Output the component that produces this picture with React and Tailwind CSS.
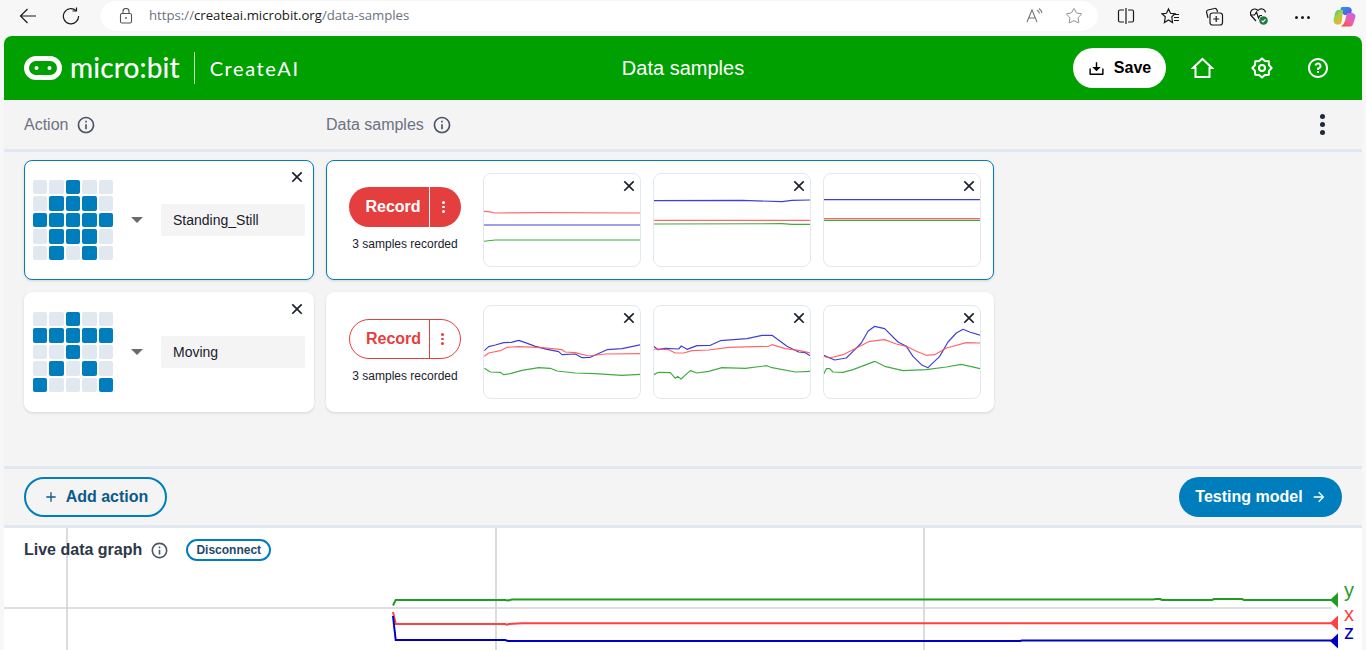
import React from "react";
import { RiInformationLine, RiCloseLine, RiDownload2Line, RiAddLine, RiArrowRightLine, RiQuestionLine } from "react-icons/ri";
import { Star } from "lucide-react";

const BLUE = "#0000c0";
const RED = "#ff4d4d";
const GREEN = "#1f9d1f";

const pts = (a) => a.map((p) => p.join(",")).join(" ");

const row1 = [
  {
    r: [[24, 139], [40, 140], [60, 144], [200, 143], [496, 144]],
    b: [[24, 180], [496, 180]],
    g: [[24, 229], [60, 225], [496, 225]],
  },
  {
    b: [[534, 107], [800, 106], [920, 110], [950, 106], [1006, 105]],
    r: [[534, 166], [1006, 166]],
    g: [[534, 177], [920, 176], [950, 178], [1006, 178]],
  },
  {
    b: [[1041, 104], [1512, 104]],
    r: [[1041, 161], [1512, 161]],
    g: [[1041, 166], [1512, 166]],
  },
];
const row2 = [
  {
    b: [[27, 158], [40, 146], [60, 141], [85, 134], [108, 133], [130, 127], [150, 134], [180, 145], [215, 154], [250, 161], [260, 170], [300, 168], [320, 179], [345, 178], [395, 155], [440, 152], [496, 140]],
    r: [[27, 175], [40, 165], [75, 158], [95, 148], [130, 146], [200, 149], [260, 155], [270, 162], [300, 164], [340, 174], [390, 168], [496, 167]],
    g: [[27, 211], [45, 222], [75, 223], [85, 230], [105, 227], [140, 217], [190, 209], [225, 211], [245, 219], [300, 225], [360, 227], [440, 232], [496, 229]],
  },
  {
    b: [[535, 145], [548, 155], [570, 151], [610, 153], [618, 144], [635, 154], [665, 143], [705, 142], [735, 128], [815, 122], [860, 112], [890, 112], [935, 145], [970, 162], [990, 164], [1006, 174]],
    r: [[535, 153], [580, 155], [600, 165], [625, 165], [650, 158], [700, 156], [760, 148], [880, 145], [890, 140], [930, 152], [970, 157], [1006, 165]],
    g: [[535, 230], [550, 223], [585, 224], [600, 241], [607, 235], [617, 243], [645, 218], [665, 225], [700, 220], [740, 209], [810, 211], [875, 203], [890, 209], [960, 222], [1006, 220]],
  },
  {
    b: [[1042, 172], [1075, 186], [1110, 180], [1130, 160], [1155, 135], [1175, 100], [1195, 85], [1225, 92], [1265, 132], [1290, 145], [1310, 175], [1335, 200], [1355, 209], [1390, 175], [1415, 132], [1440, 105], [1460, 94], [1480, 102], [1512, 112]],
    r: [[1042, 175], [1060, 180], [1100, 170], [1140, 150], [1180, 130], [1225, 125], [1260, 138], [1290, 145], [1320, 160], [1350, 172], [1375, 170], [1410, 150], [1470, 134], [1512, 135]],
    g: [[1042, 228], [1050, 212], [1060, 212], [1070, 222], [1100, 223], [1130, 215], [1195, 190], [1225, 205], [1280, 218], [1350, 215], [1410, 207], [1455, 199], [1512, 212]],
  },
];

function Sample({ data, x0, y0 }) {
  return (
    <div className="relative w-[158px] h-[94px] rounded-lg border border-[#e2e8f0] bg-white overflow-hidden">
      <svg className="block w-full h-full" viewBox={`${x0} ${y0} 468 276`} fill="none" strokeWidth="3.5" strokeLinejoin="round">
        <polyline points={pts(data.g)} stroke={GREEN} opacity="0.85" />
        <polyline points={pts(data.b)} stroke={BLUE} opacity="0.75" />
        <polyline points={pts(data.r)} stroke={RED} opacity="0.85" />
      </svg>
      <RiCloseLine className="absolute top-[2px] right-[1px] text-[#1a202c]" size={20} />
    </div>
  );
}

function Led({ on }) {
  const cells = [];
  for (let i = 0; i < 25; i++) {
    cells.push(
      <div key={i} className={on.includes(i) ? "rounded-[2px] bg-[#007dbc]" : "rounded-[2px] bg-[#e2e8f0]"} />
    );
  }
  return <div className="grid grid-cols-5 grid-rows-5 gap-[2px] w-[80px] h-[80px]">{cells}</div>;
}

function Row({ name, on, active, data, x0s, y0 }) {
  const ring = active ? "border border-[#007dbc]" : "border border-white";
  const dot = active ? "w-[3px] h-[2.5px] rounded-full bg-white" : "w-[3px] h-[2.5px] rounded-full bg-[#e53e3e]";
  return (
    <div className="flex gap-3">
      <div className={`relative w-[290px] h-[120px] rounded-lg bg-white shadow-sm ${ring} flex items-center pl-[8px]`}>
        <Led on={on} />
        <div className="ml-[18px] w-0 h-0 border-l-[6px] border-r-[6px] border-t-[6px] border-l-transparent border-r-transparent border-t-[#6b6b6b]" />
        <div className="ml-[18px] w-[144px] h-8 bg-[#f4f4f4] rounded-[2px] flex items-center pl-3 text-sm text-[#1a202c]">{name}</div>
        <RiCloseLine className="absolute top-[6px] right-[6px] text-[#1a202c]" size={20} />
      </div>
      <div className={`w-[668px] h-[120px] rounded-lg bg-white shadow-sm ${ring} flex items-center`}>
        <div className="w-[156px] flex flex-col items-center shrink-0">
          <div className={active
            ? "flex w-[112px] h-10 rounded-full bg-[#e53e3e] text-white overflow-hidden"
            : "flex w-[112px] h-10 rounded-full bg-white border border-[#e53e3e] text-[#e53e3e] overflow-hidden"}>
            <div className={active ? "w-[80px] flex items-center justify-center pl-[8px] text-base font-bold" : "w-[79px] flex items-center justify-center pl-[8px] text-base font-bold"}>Record</div>
            <div className={active ? "flex-1 flex items-center justify-center pr-[5px] border-l border-white" : "flex-1 flex items-center justify-center pr-[5px] border-l border-[#e53e3e]"}>
              <div className="flex flex-col gap-[2px]">
                <span className={dot} />
                <span className={dot} />
                <span className={dot} />
              </div>
            </div>
          </div>
          <div className="mt-[10px] mb-[1px] text-xs leading-[15px] text-[#1a202c]">3 samples recorded</div>
        </div>
        <div className="flex gap-3">
          {data.map((d, i) => <Sample key={i} data={d} x0={x0s[i]} y0={y0} />)}
        </div>
      </div>
    </div>
  );
}

function Chrome() {
  return (
    <div className="h-9 shrink-0 relative flex items-center font-['Open_Sans',sans-serif] text-[#1a1a1a]">
      <div className="w-[100px] flex items-center pl-[19px] gap-[25px] shrink-0 -mt-[4px]">
        <svg width="18" height="18" viewBox="0 0 18 18" fill="none" stroke="#1a1a1a" strokeWidth="1.2">
          <path d="M1.5 9 H17 M8.5 2 L1.5 9 L8.5 16" />
        </svg>
        <svg width="18" height="18" viewBox="0 0 18 18" fill="none" stroke="#1a1a1a" strokeWidth="1.2">
          <path d="M14 3.5 A7.6 7.6 0 1 0 16.6 9" />
          <path d="M10.5 4 H14.5 V0.5" />
        </svg>
      </div>
      <div className="w-[998px] h-[30px] -mt-[4px] bg-white rounded-full flex items-center shrink-0 shadow-[0_0_1px_rgba(0,0,0,0.08)]">
        <svg className="ml-[19px] shrink-0" width="14" height="16" viewBox="0 0 14 16" fill="none" stroke="#555" strokeWidth="1.1">
          <rect x="1.5" y="5.5" width="11" height="9.5" rx="1.5" />
          <path d="M4 5.5 V3.5 A3 3 0 0 1 10 3.5 V5.5" />
          <circle cx="7" cy="10" r="0.9" fill="#555" stroke="none" />
        </svg>
        <div className="ml-[16px] text-[13.2px] whitespace-nowrap text-[#6b7280]">
          https://<span className="text-[#1a1a1a]">createai.microbit.org</span>/data-samples
        </div>
        <div className="ml-auto flex items-center gap-[22px] pr-[15px] text-[#777]">
          <svg width="18" height="18" viewBox="0 0 18 18" fill="none" stroke="currentColor" strokeWidth="1.1">
            <path d="M2 15 L7 3 L12 15 M4 11 H10" />
            <path d="M12 3 Q14 4 14.5 6.5 M14 1.5 Q16.5 3 17 6" />
          </svg>
          <Star size={18} strokeWidth={1.1} />
        </div>
      </div>
      <svg className="absolute left-[1117px] top-[7px]" width="18" height="18" viewBox="0 0 18 18" fill="none" stroke="#1a1a1a" strokeWidth="1.2">
        <path d="M7 3 H3 a1.5 1.5 0 0 0 -1.5 1.5 V13.5 A1.5 1.5 0 0 0 3 15 H7 M11 3 H15 a1.5 1.5 0 0 1 1.5 1.5 V13.5 A1.5 1.5 0 0 1 15 15 H11 M9 1 V17" />
      </svg>
      <svg className="absolute left-[1161px] top-[7px]" width="19" height="18" viewBox="0 0 19 18" fill="none" stroke="#1a1a1a" strokeWidth="1.2">
        <path d="M7.5 2 L9.5 6.3 L14 6.8 L10.8 9.8 L11.5 15.5 L7.5 13 L3.4 15.5 L4.3 9.8 L1 6.8 L5.5 6.3 Z" />
        <path d="M13 7.5 H18 M13 10.5 H18 M13 13.5 H18" />
      </svg>
      <svg className="absolute left-[1205px] top-[7px]" width="19" height="19" viewBox="0 0 19 19" fill="none" stroke="#1a1a1a" strokeWidth="1.2">
        <path d="M3 11 L1.5 5 A2 2 0 0 1 3 3 L9.5 1.5 A2 2 0 0 1 12 3 L12.5 5" />
        <rect x="5" y="6" width="12.5" height="12" rx="2.5" />
        <path d="M11.2 9 V15 M8.2 12 H14.2" />
      </svg>
      <svg className="absolute left-[1249px] top-[6px]" width="21" height="20" viewBox="0 0 21 20" fill="none" stroke="#1a1a1a" strokeWidth="1.2">
        <path d="M7 15 L2.5 10 A4.2 4.2 0 0 1 9 4.5 A4.2 4.2 0 0 1 16.5 6.5" />
        <path d="M1 9 H5.5 L7.5 6 L9.5 12 L11 9.5 H13" />
        <circle cx="14.5" cy="14.5" r="4.3" fill="#1f7a3d" stroke="none" />
        <path d="M12.6 14.6 L14 16 L16.5 13.4" stroke="#fff" />
      </svg>
      <div className="absolute left-[1295px] top-[16px] flex gap-[3px]">
        <span className="w-[3px] h-[3px] rounded-full bg-[#1a1a1a]" />
        <span className="w-[3px] h-[3px] rounded-full bg-[#1a1a1a]" />
        <span className="w-[3px] h-[3px] rounded-full bg-[#1a1a1a]" />
      </div>
      <svg className="absolute left-[1333px] top-[6px]" width="23" height="22" viewBox="0 0 23 22">
        <defs>
          <linearGradient id="cpA" x1="0" y1="0" x2="1" y2="1">
            <stop offset="0" stopColor="#1f9fe8" />
            <stop offset="1" stopColor="#5f4ce8" />
          </linearGradient>
          <linearGradient id="cpB" x1="0" y1="0" x2="0.6" y2="1">
            <stop offset="0" stopColor="#35c0a0" />
            <stop offset="0.5" stopColor="#a8d040" />
            <stop offset="1" stopColor="#f5b030" />
          </linearGradient>
          <linearGradient id="cpC" x1="0.8" y1="0" x2="0.2" y2="1">
            <stop offset="0" stopColor="#c860e8" />
            <stop offset="0.6" stopColor="#f060a0" />
            <stop offset="1" stopColor="#f05030" />
          </linearGradient>
        </defs>
        <path d="M9 1 H15 Q18 1 18.8 4 L18 9 H11 L7.5 5 Q7.5 1 9 1 Z" fill="url(#cpA)" />
        <path d="M5.5 4 H10 L8.8 15 Q8.3 18.5 5.5 18.5 H3.5 Q0.5 17.5 0.5 14 L2 7.5 Q2.7 4 5.5 4 Z" fill="url(#cpB)" />
        <path d="M14 7 H19.5 Q22.8 8 22.4 11 L20.5 17 Q19.5 20.5 17 20.5 H8 Q11 19 12 15 Z" fill="url(#cpC)" />
      </svg>
    </div>
  );
}

function Gear() {
  const c = 11;
  const p = [];
  for (let i = 0; i < 16; i++) {
    const a = (i * Math.PI) / 8;
    const r = i % 2 === 0 ? 9.6 : 7.6;
    p.push(`${(c + r * Math.cos(a)).toFixed(2)},${(c + r * Math.sin(a)).toFixed(2)}`);
  }
  return (
    <svg className="ml-[37px]" width="22" height="22" viewBox="0 0 22 22" fill="none" stroke="#fff" strokeWidth="2" strokeLinejoin="round">
      <polygon points={p.join(" ")} />
      <circle cx="11" cy="11" r="3" />
    </svg>
  );
}

function Header() {
  return (
    <div className="relative h-16 shrink-0 bg-[#00a000] rounded-t-lg flex items-center px-5 text-white">
      <svg width="38" height="24" viewBox="0 0 38 24" fill="none" className="shrink-0">
        <rect x="2.5" y="2.5" width="33" height="19" rx="9.5" stroke="#fff" strokeWidth="5" />
        <circle cx="12.5" cy="12" r="2" fill="#fff" />
        <circle cx="25.5" cy="12" r="2" fill="#fff" />
      </svg>
      <div className="ml-[8px] text-[28px] leading-none font-['Lato',sans-serif] font-medium tracking-[0.1px] -mt-[3px]">micro:bit</div>
      <div className="ml-[14px] w-px h-8 bg-[#b5e5b5]" />
      <div className="ml-[15px] text-[20px] font-['Lato',sans-serif] font-normal tracking-[1.6px]">CreateAI</div>
      <div className="absolute left-0 right-0 text-center text-[20px] font-medium pointer-events-none">Data samples</div>
      <div className="ml-auto mr-[12px] flex items-center">
        <div className="w-[93px] h-10 rounded-full bg-white text-black flex items-center justify-center gap-[9px]">
          <RiDownload2Line size={17} />
          <span className="text-base font-bold">Save</span>
        </div>
        <svg className="ml-[25px]" width="23" height="22" viewBox="0 0 23 22" fill="none" stroke="#fff" strokeWidth="2" strokeLinejoin="miter">
          <path d="M11.5 2 L21 11 H18.5 V20 H4.5 V11 H2 Z" />
        </svg>
        <Gear />
        <RiQuestionLine className="ml-[33px]" size={24} />
      </div>
    </div>
  );
}

export default function App() {
  return (
    <div className="w-[1366px] h-[650px] overflow-hidden bg-[#f7f7f7] flex flex-col font-['Liberation_Sans',sans-serif]">
      <Chrome />
      <div className="mx-1 flex-1 min-h-0 flex flex-col">
        <Header />
        <div className="h-[52px] shrink-0 bg-[#f4f4f4] border-b-[3px] border-[#e2e8f0] flex items-center px-5 text-[#6b7280] relative">
          <div className="w-[302px] flex items-center gap-2 text-base">
            <span>Action</span>
            <RiInformationLine size={20} className="text-[#4a5568]" />
          </div>
          <div className="flex items-center gap-2 text-base">
            <span>Data samples</span>
            <RiInformationLine size={20} className="text-[#4a5568]" />
          </div>
          <div className="ml-auto mr-[17px] flex flex-col gap-[3px]">
            <span className="w-[5px] h-[5px] rounded-full bg-[#1f2937]" />
            <span className="w-[5px] h-[5px] rounded-full bg-[#1f2937]" />
            <span className="w-[5px] h-[5px] rounded-full bg-[#1f2937]" />
          </div>
        </div>
        <div className="h-[314px] shrink-0 bg-[#f4f4f4] px-5 pt-2 flex flex-col gap-3">
          <Row name="Standing_Still" active on={[2, 6, 7, 8, 10, 11, 12, 13, 14, 16, 17, 18, 21, 23]} data={row1} x0s={[26, 536, 1043]} y0={27} />
          <Row name="Moving" on={[2, 5, 6, 7, 8, 9, 12, 16, 18, 20, 24]} data={row2} x0s={[26, 536, 1043]} y0={24} />
        </div>
        <div className="h-[59px] shrink-0 bg-[#f4f4f4] border-t-[3px] border-[#e2e8f0] flex items-center justify-between px-5">
          <div className="w-[143px] h-10 rounded-full border-2 border-[#007dbc] flex items-center justify-center gap-[7px] text-base font-bold text-[#0b5a8a]">
            <RiAddLine size={16} />
            <span>Add action</span>
          </div>
          <div className="w-[163px] h-10 rounded-full bg-[#007dbc] text-white flex items-center justify-center gap-[8px] pl-[1px] text-base font-bold">
            <span>Testing model</span>
            <RiArrowRightLine size={16} />
          </div>
        </div>
        <div className="relative flex-1 min-h-0 bg-white border-t-[3px] border-[#e2e8f0] overflow-hidden">
          <svg className="absolute left-0 top-0" width="1358" height="122" viewBox="4 528 1358 122" fill="none">
            <path d="M67 528 V650 M496 528 V650 M924 528 V650" stroke="#d4d4d4" strokeWidth="1.6" />
            <path d="M4 608 H1332" stroke="#d4d4d4" strokeWidth="1.6" />
            <path d="M393 605.5 L395.7 600 H505 L508 600.5 L512 599.5 H1153 L1156 599 H1160 L1162 600 H1212 L1214 599 H1242 L1244 600 H1332" stroke={GREEN} strokeWidth="2" />
            <path d="M393 612 L395.7 624 H505 L507 624.7 L509 624 L522 623.3 H1332" stroke="#ff4040" strokeWidth="2" />
            <path d="M393 616 L395.7 640 H505 L508 641 H1020 L1022 640.6 H1332" stroke="#0000c0" strokeWidth="2" />
            <path d="M1330 600 L1338 592.5 V607.5 Z" fill={GREEN} />
            <path d="M1330 623 L1338 615.5 V630.5 Z" fill="#ff4040" />
            <path d="M1330 641 L1338 633.5 V648.5 Z" fill="#0000c0" />
            <text x="1344" y="597" fontSize="20" fontFamily="Liberation Sans" fill={GREEN}>y</text>
            <text x="1344" y="621" fontSize="20" fontFamily="Liberation Sans" fill="#ff4040">x</text>
            <text x="1344" y="639" fontSize="20" fontFamily="Liberation Sans" fill="#0000c0">z</text>
          </svg>
          <div className="relative flex items-center px-5 pt-[11px]">
            <span className="text-base font-bold text-[#2d3748] leading-[22px]">Live data graph</span>
            <RiInformationLine size={19} className="ml-[8px] text-[#4a5568]" />
            <div className="ml-[17px] w-[85px] h-[22px] rounded-full border-2 border-[#007dbc] bg-white flex items-center justify-center text-xs font-bold text-[#1f4a6b]">Disconnect</div>
          </div>
        </div>
      </div>
    </div>
  );
}
